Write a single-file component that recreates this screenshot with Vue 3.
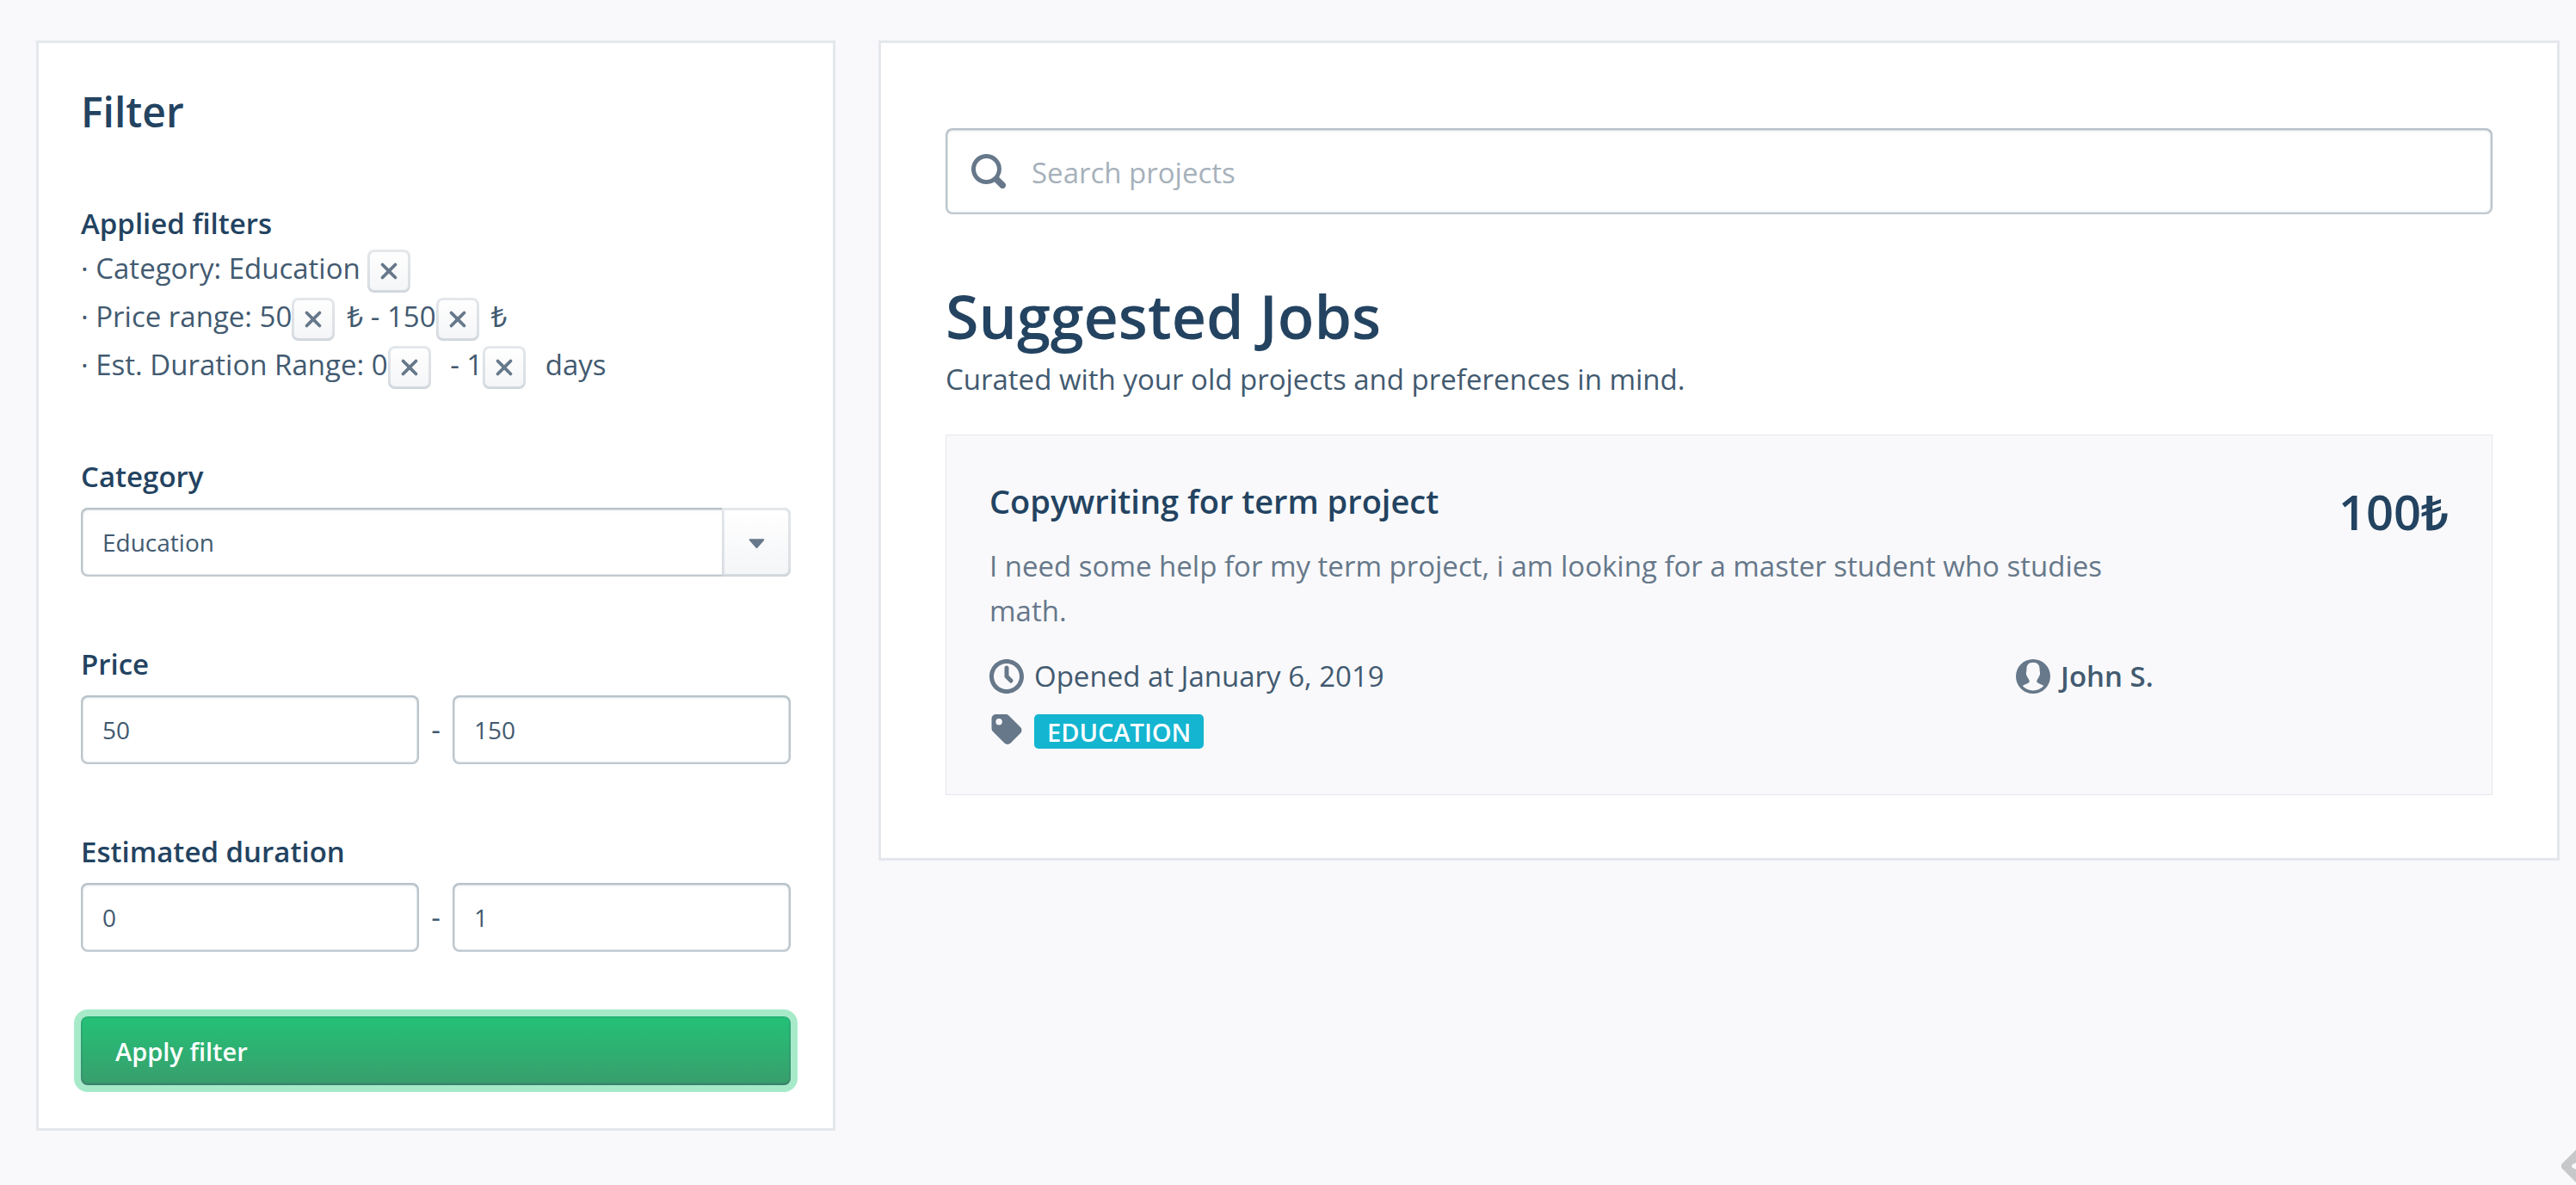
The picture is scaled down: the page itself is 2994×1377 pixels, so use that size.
<script setup>
import { ref } from 'vue'

const category = ref('Education')
const priceMin = ref('50')
const priceMax = ref('150')
const durationMin = ref('0')
const durationMax = ref('1')
const query = ref('')

const crossPath =
  'M9.41 8l3.29-3.29c.19-.18.3-.43.3-.71a1.003 1.003 0 00-1.71-.71L8 6.59l-3.29-3.3a1.003 1.003 0 00-1.42 1.42L6.59 8 3.3 11.29c-.19.18-.3.43-.3.71a1.003 1.003 0 001.71.71L8 9.41l3.29 3.29c.18.19.43.3.71.3a1.003 1.003 0 00.71-1.71L9.41 8z'
</script>

<template>
  <main class="page">
    <form class="panel filter" @submit.prevent>
      <h2 class="filter-title">Filter</h2>

      <section class="applied">
        <h3 class="label">Applied filters</h3>
        <ul class="applied-list">
          <li>
            <span>· Category: Education&nbsp;</span>
            <button type="button" class="remove" aria-label="Remove category">
              <svg viewBox="0 0 16 16"><path :d="crossPath" /></svg>
            </button>
          </li>
          <li>
            <span>· Price range: 50</span>
            <button type="button" class="remove" aria-label="Remove minimum price">
              <svg viewBox="0 0 16 16"><path :d="crossPath" /></svg>
            </button>
            <span class="after">₺ - 150</span>
            <button type="button" class="remove" aria-label="Remove maximum price">
              <svg viewBox="0 0 16 16"><path :d="crossPath" /></svg>
            </button>
            <span class="after">₺</span>
          </li>
          <li>
            <span>· Est. Duration Range: 0</span>
            <button type="button" class="remove" aria-label="Remove minimum duration">
              <svg viewBox="0 0 16 16"><path :d="crossPath" /></svg>
            </button>
            <span class="after">&nbsp;- 1</span>
            <button type="button" class="remove" aria-label="Remove maximum duration">
              <svg viewBox="0 0 16 16"><path :d="crossPath" /></svg>
            </button>
            <span class="after">&nbsp;days</span>
          </li>
        </ul>
      </section>

      <section class="group">
        <label class="label" for="category">Category</label>
        <div class="select-wrap">
          <select id="category" v-model="category" class="field">
            <option>Education</option>
          </select>
          <span class="select-toggle" aria-hidden="true">
            <svg viewBox="0 0 16 16"><path d="M12 6.5c0-.28-.22-.5-.5-.5h-7a.495.495 0 00-.37.83l3.5 4c.09.1.22.17.37.17s.28-.07.37-.17l3.5-4c.08-.09.13-.2.13-.33z" /></svg>
          </span>
        </div>
      </section>

      <section class="group">
        <label class="label" for="price-min">Price</label>
        <div class="range">
          <input id="price-min" v-model="priceMin" class="field" type="text" />
          <span>-</span>
          <input v-model="priceMax" class="field" type="text" aria-label="Maximum price" />
        </div>
      </section>

      <section class="group">
        <label class="label" for="duration-min">Estimated duration</label>
        <div class="range">
          <input id="duration-min" v-model="durationMin" class="field" type="text" />
          <span>-</span>
          <input v-model="durationMax" class="field" type="text" aria-label="Maximum duration" />
        </div>
      </section>

      <button type="submit" class="apply">Apply filter</button>
    </form>

    <section class="panel results">
      <label class="search">
        <svg class="icon" viewBox="0 0 16 16" aria-hidden="true"><path d="M15.55 13.43l-2.67-2.68a6.94 6.94 0 001.11-3.76c0-3.87-3.13-7-7-7s-7 3.13-7 7 3.13 7 7 7c1.39 0 2.68-.42 3.76-1.11l2.68 2.67a1.498 1.498 0 102.12-2.12zm-8.56-1.44c-2.76 0-5-2.24-5-5s2.24-5 5-5 5 2.24 5 5-2.24 5-5 5z" /></svg>
        <input v-model="query" type="search" placeholder="Search projects" aria-label="Search projects" />
      </label>

      <h1 class="heading">Suggested Jobs</h1>
      <p class="subtitle">Curated with your old projects and preferences in mind.</p>

      <article class="job">
        <h2 class="job-title">Copywriting for term project</h2>
        <p class="job-price">100₺</p>
        <p class="job-text">
          I need some help for my term project, i am looking for a master student who studies math.
        </p>
        <div class="job-meta">
          <p class="meta">
            <svg class="icon" viewBox="0 0 16 16" aria-hidden="true"><path d="M8 0C3.58 0 0 3.58 0 8s3.58 8 8 8 8-3.58 8-8-3.58-8-8-8zm0 14c-3.31 0-6-2.69-6-6s2.69-6 6-6 6 2.69 6 6-2.69 6-6 6zm1-6.41V4c0-.55-.45-1-1-1s-1 .45-1 1v4c0 .28.11.53.29.71l2 2a1.003 1.003 0 001.42-1.42L9 7.59z" /></svg>
            <span>Opened at January 6, 2019</span>
          </p>
          <p class="meta owner">
            <svg class="icon" viewBox="0 0 16 16" aria-hidden="true"><path fill-rule="evenodd" d="M8 0a8 8 0 100 16A8 8 0 008 0zM8 1.5C9.9 1.5 11 2.6 11 4.3C11 5 11.1 5.6 11.2 6.2C11.3 6.8 11.2 7.4 10.8 8C10.5 8.7 10 9.3 9.8 9.8C9.7 10.2 9.7 10.5 9.9 10.8C10.6 11.4 12 11.7 12.9 12.4A6.6 6.6 0 013.1 12.4C4 11.7 5.4 11.4 6.1 10.8C6.3 10.5 6.3 10.2 6.2 9.8C6 9.3 5.5 8.7 5.2 8C4.8 7.4 4.7 6.8 4.8 6.2C4.9 5.6 5 5 5 4.3C5 2.6 6.1 1.5 8 1.5Z" /></svg>
            <span>John S.</span>
          </p>
        </div>
        <p class="meta tags">
          <svg class="icon" viewBox="0 0 16 16" aria-hidden="true"><path fill-rule="evenodd" d="M1 2a2 2 0 012-2h4.584a2 2 0 011.414.586l5.413 5.412a2 2 0 010 2.829L9.827 13.41a2 2 0 01-2.829 0L1.586 7.998A2 2 0 011 6.584V2zm3.487-.007a1.494 1.494 0 100 2.987 1.494 1.494 0 000-2.987z" /></svg>
          <span class="badge">EDUCATION</span>
        </p>
      </article>
    </section>

    <svg class="corner" viewBox="0 0 17 42" aria-hidden="true">
      <path fill-rule="evenodd" d="M1 18L19 0V42L1 24Q-2 21 1 18ZM13 19Q11 21 13 23L17 25V17Z" />
    </svg>
  </main>
</template>

<style>
body {
  margin: 0;
  background: #f9f9fb;
}
</style>

<style scoped>
.page {
  display: grid;
  grid-template-columns: 929fr 1954fr;
  align-items: start;
  gap: 50px;
  padding: 47px 19px 47px 42px;
  font-family: "Open Sans", "Noto Sans", sans-serif;
  font-size: 33px;
  line-height: 52px;
  color: #425a70;
}

h1,
h2,
h3,
p,
ul {
  margin: 0;
  padding: 0;
  font-weight: 400;
}

svg {
  display: block;
  flex: none;
  fill: #66788a;
}

.panel {
  box-sizing: border-box;
  min-width: 0;
  border: 3px solid #e4e7eb;
  background: #fff;
}

.filter {
  display: flex;
  flex-direction: column;
  padding: 50px 49px;
}

.filter-title {
  font-size: 48px;
  line-height: 60px;
  font-weight: 600;
  color: #234361;
}

.applied {
  margin-top: 76px;
}

.label {
  display: block;
  line-height: 48px;
  font-size: 33px;
  font-weight: 600;
  color: #234361;
}

.applied-list {
  list-style: none;
}

.applied-list li {
  display: flex;
  height: 56px;
  line-height: 56px;
  white-space: nowrap;
}

.after {
  margin-left: 14px;
}

.remove {
  display: flex;
  align-items: center;
  justify-content: center;
  width: 50px;
  height: 50px;
  margin-top: 6px;
  padding: 0;
  border: 0;
  border-radius: 8px;
  background: linear-gradient(#fff, #f4f5f7);
  box-shadow: inset 0 0 0 3px rgba(67, 90, 111, 0.14), inset 0 -2px 2px 0 rgba(67, 90, 111, 0.08);
}

.remove svg {
  width: 30px;
  height: 30px;
}

.group {
  margin-top: 78px;
}

.group .label {
  margin-bottom: 12px;
}

.field {
  box-sizing: border-box;
  width: 100%;
  min-width: 0;
  height: 80px;
  margin: 0;
  padding: 0 25px;
  border: 0;
  border-radius: 8px;
  background: #fff;
  font-family: inherit;
  font-size: 28px;
  color: #425a70;
  outline: none;
  appearance: none;
}

.field,
.search {
  box-shadow: inset 0 0 0 2px rgba(67, 90, 111, 0.2), inset 0 0 0 3px rgba(67, 90, 111, 0.14), inset 0 2px 5px 0 rgba(67, 90, 111, 0.14);
}

.select-wrap {
  position: relative;
}

.select-toggle {
  position: absolute;
  top: 0;
  right: 0;
  bottom: 0;
  display: flex;
  align-items: center;
  justify-content: center;
  width: 80px;
  border-radius: 0 8px 8px 0;
  background: linear-gradient(#fff, #f4f5f7);
  box-shadow: inset 0 0 0 3px rgba(67, 90, 111, 0.14), inset 0 -2px 2px 0 rgba(67, 90, 111, 0.08);
  pointer-events: none;
}

.select-toggle svg {
  width: 35px;
  height: 35px;
}

.range {
  display: grid;
  grid-template-columns: 1fr 39px 1fr;
  align-items: center;
  text-align: center;
}

.apply {
  height: 80px;
  margin-top: 75px;
  padding: 0 40px;
  border: 0;
  border-radius: 8px;
  background: linear-gradient(#23c277, #399d6c);
  box-shadow: 0 0 0 8px #a6eaca, inset 0 0 0 2px rgba(67, 90, 111, 0.14), inset 0 -2px 2px 0 rgba(67, 90, 111, 0.4);
  font-family: inherit;
  font-size: 29px;
  font-weight: 600;
  text-align: left;
  color: #fff;
}

.results {
  display: flex;
  flex-direction: column;
  padding: 99px 75px 73px;
}

.icon {
  width: 40px;
  height: 40px;
}

.search {
  display: flex;
  align-items: center;
  gap: 30px;
  height: 100px;
  padding: 0 30px;
  border-radius: 8px;
}

.search input {
  flex: 1;
  min-width: 0;
  height: 60px;
  padding: 2px 0 0;
  border: 0;
  background: none;
  font-family: inherit;
  font-size: 33px;
  color: #425a70;
  outline: none;
  appearance: none;
}

.search input::placeholder {
  color: #a6b1bb;
  opacity: 1;
}

.heading {
  margin-top: 73px;
  font-size: 70px;
  line-height: 90px;
  font-weight: 600;
  color: #234361;
}

.subtitle {
  margin-top: 3px;
}

.job {
  display: grid;
  grid-template-columns: 1fr auto;
  align-items: start;
  margin-top: 38px;
  padding: 50px 50px 47px;
  border: 1px solid #e4e7eb;
  background: #f9f9fb;
}

.job-title {
  font-size: 38px;
  line-height: 52px;
  font-weight: 600;
  color: #234361;
}

.job-price {
  height: 52px;
  font-size: 56px;
  line-height: 76px;
  font-weight: 600;
  color: #234361;
}

.job-text {
  grid-column: 1 / -1;
  width: 79%;
  margin-top: 24px;
  color: #66788a;
}

.job-meta {
  grid-column: 1 / -1;
  display: grid;
  grid-template-columns: 1193fr 503fr;
  margin-top: 24px;
}

.meta {
  display: flex;
  align-items: center;
  gap: 12px;
}

.owner {
  font-weight: 600;
}

.tags {
  grid-column: 1 / -1;
  height: 52px;
  margin-top: 12px;
}

.badge {
  height: 40px;
  padding: 0 15px;
  border-radius: 5px;
  background: #14b5d0;
  font-size: 29px;
  line-height: 42px;
  font-weight: 600;
  color: #fff;
}

.corner {
  position: fixed;
  right: 0;
  bottom: 1px;
  width: 17px;
  height: 42px;
  fill: #c7c8ca;
}
</style>
